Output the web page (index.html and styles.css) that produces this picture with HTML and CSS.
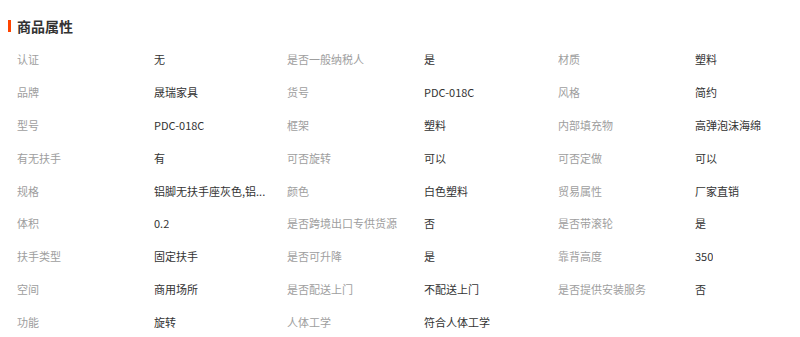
FILE: index.html
```html
<!DOCTYPE html>
<html lang="zh-CN">
<head>
<meta charset="utf-8">
<title>商品属性</title>
<link rel="stylesheet" href="styles.css">
</head>
<body>
<section class="attrs">
  <h2 class="attrs-title"><span class="bar"></span>商品属性</h2>
  <ul class="attr-list">
    <li class="attr"><span class="k">认证</span><span class="v">无</span></li>
    <li class="attr"><span class="k">是否一般纳税人</span><span class="v">是</span></li>
    <li class="attr"><span class="k">材质</span><span class="v">塑料</span></li>
    <li class="attr"><span class="k">品牌</span><span class="v">晟瑞家具</span></li>
    <li class="attr"><span class="k">货号</span><span class="v">PDC-018C</span></li>
    <li class="attr"><span class="k">风格</span><span class="v">简约</span></li>
    <li class="attr"><span class="k">型号</span><span class="v">PDC-018C</span></li>
    <li class="attr"><span class="k">框架</span><span class="v">塑料</span></li>
    <li class="attr"><span class="k">内部填充物</span><span class="v">高弹泡沫海绵</span></li>
    <li class="attr"><span class="k">有无扶手</span><span class="v">有</span></li>
    <li class="attr"><span class="k">可否旋转</span><span class="v">可以</span></li>
    <li class="attr"><span class="k">可否定做</span><span class="v">可以</span></li>
    <li class="attr"><span class="k">规格</span><span class="v">铝脚无扶手座灰色,铝...</span></li>
    <li class="attr"><span class="k">颜色</span><span class="v">白色塑料</span></li>
    <li class="attr"><span class="k">贸易属性</span><span class="v">厂家直销</span></li>
    <li class="attr"><span class="k">体积</span><span class="v">0.2</span></li>
    <li class="attr"><span class="k">是否跨境出口专供货源</span><span class="v">否</span></li>
    <li class="attr"><span class="k">是否带滚轮</span><span class="v">是</span></li>
    <li class="attr"><span class="k">扶手类型</span><span class="v">固定扶手</span></li>
    <li class="attr"><span class="k">是否可升降</span><span class="v">是</span></li>
    <li class="attr"><span class="k">靠背高度</span><span class="v">350</span></li>
    <li class="attr"><span class="k">空间</span><span class="v">商用场所</span></li>
    <li class="attr"><span class="k">是否配送上门</span><span class="v">不配送上门</span></li>
    <li class="attr"><span class="k">是否提供安装服务</span><span class="v">否</span></li>
    <li class="attr"><span class="k">功能</span><span class="v">旋转</span></li>
    <li class="attr"><span class="k">人体工学</span><span class="v">符合人体工学</span></li>
  </ul>
</section>
</body>
</html>
```
FILE: styles.css
```css
html, body {
  margin: 0;
  padding: 0;
  background: #ffffff;
}
body {
  font-family: "Microsoft YaHei", "Noto Sans CJK SC", "Noto Sans", sans-serif;
  width: 800px;
  height: 337px;
  overflow: hidden;
}
.attrs {
  padding: 19px 0 0 8px;
}
.attrs-title {
  display: flex;
  align-items: center;
  margin: 0 0 10px 0;
  height: 14px;
  font-size: 14px;
  line-height: 14px;
  font-weight: bold;
  color: #333333;
}
.bar {
  width: 3px;
  height: 12px;
  background: #ff4400;
  margin-right: 6px;
}
.attr-list {
  list-style: none;
  margin: 0;
  padding: 0 0 0 9px;
  display: grid;
  grid-template-columns: 270px 271px 1fr;
  grid-auto-rows: 32.8px;
}
.attr {
  display: flex;
  align-items: center;
  font-size: 11px;
  line-height: 14px;
  white-space: nowrap;
  min-width: 0;
}
.k {
  width: 137px;
  flex: none;
  color: #9e9e9e;
  overflow: hidden;
}
.v {
  color: #333333;
  overflow: hidden;
}
```
